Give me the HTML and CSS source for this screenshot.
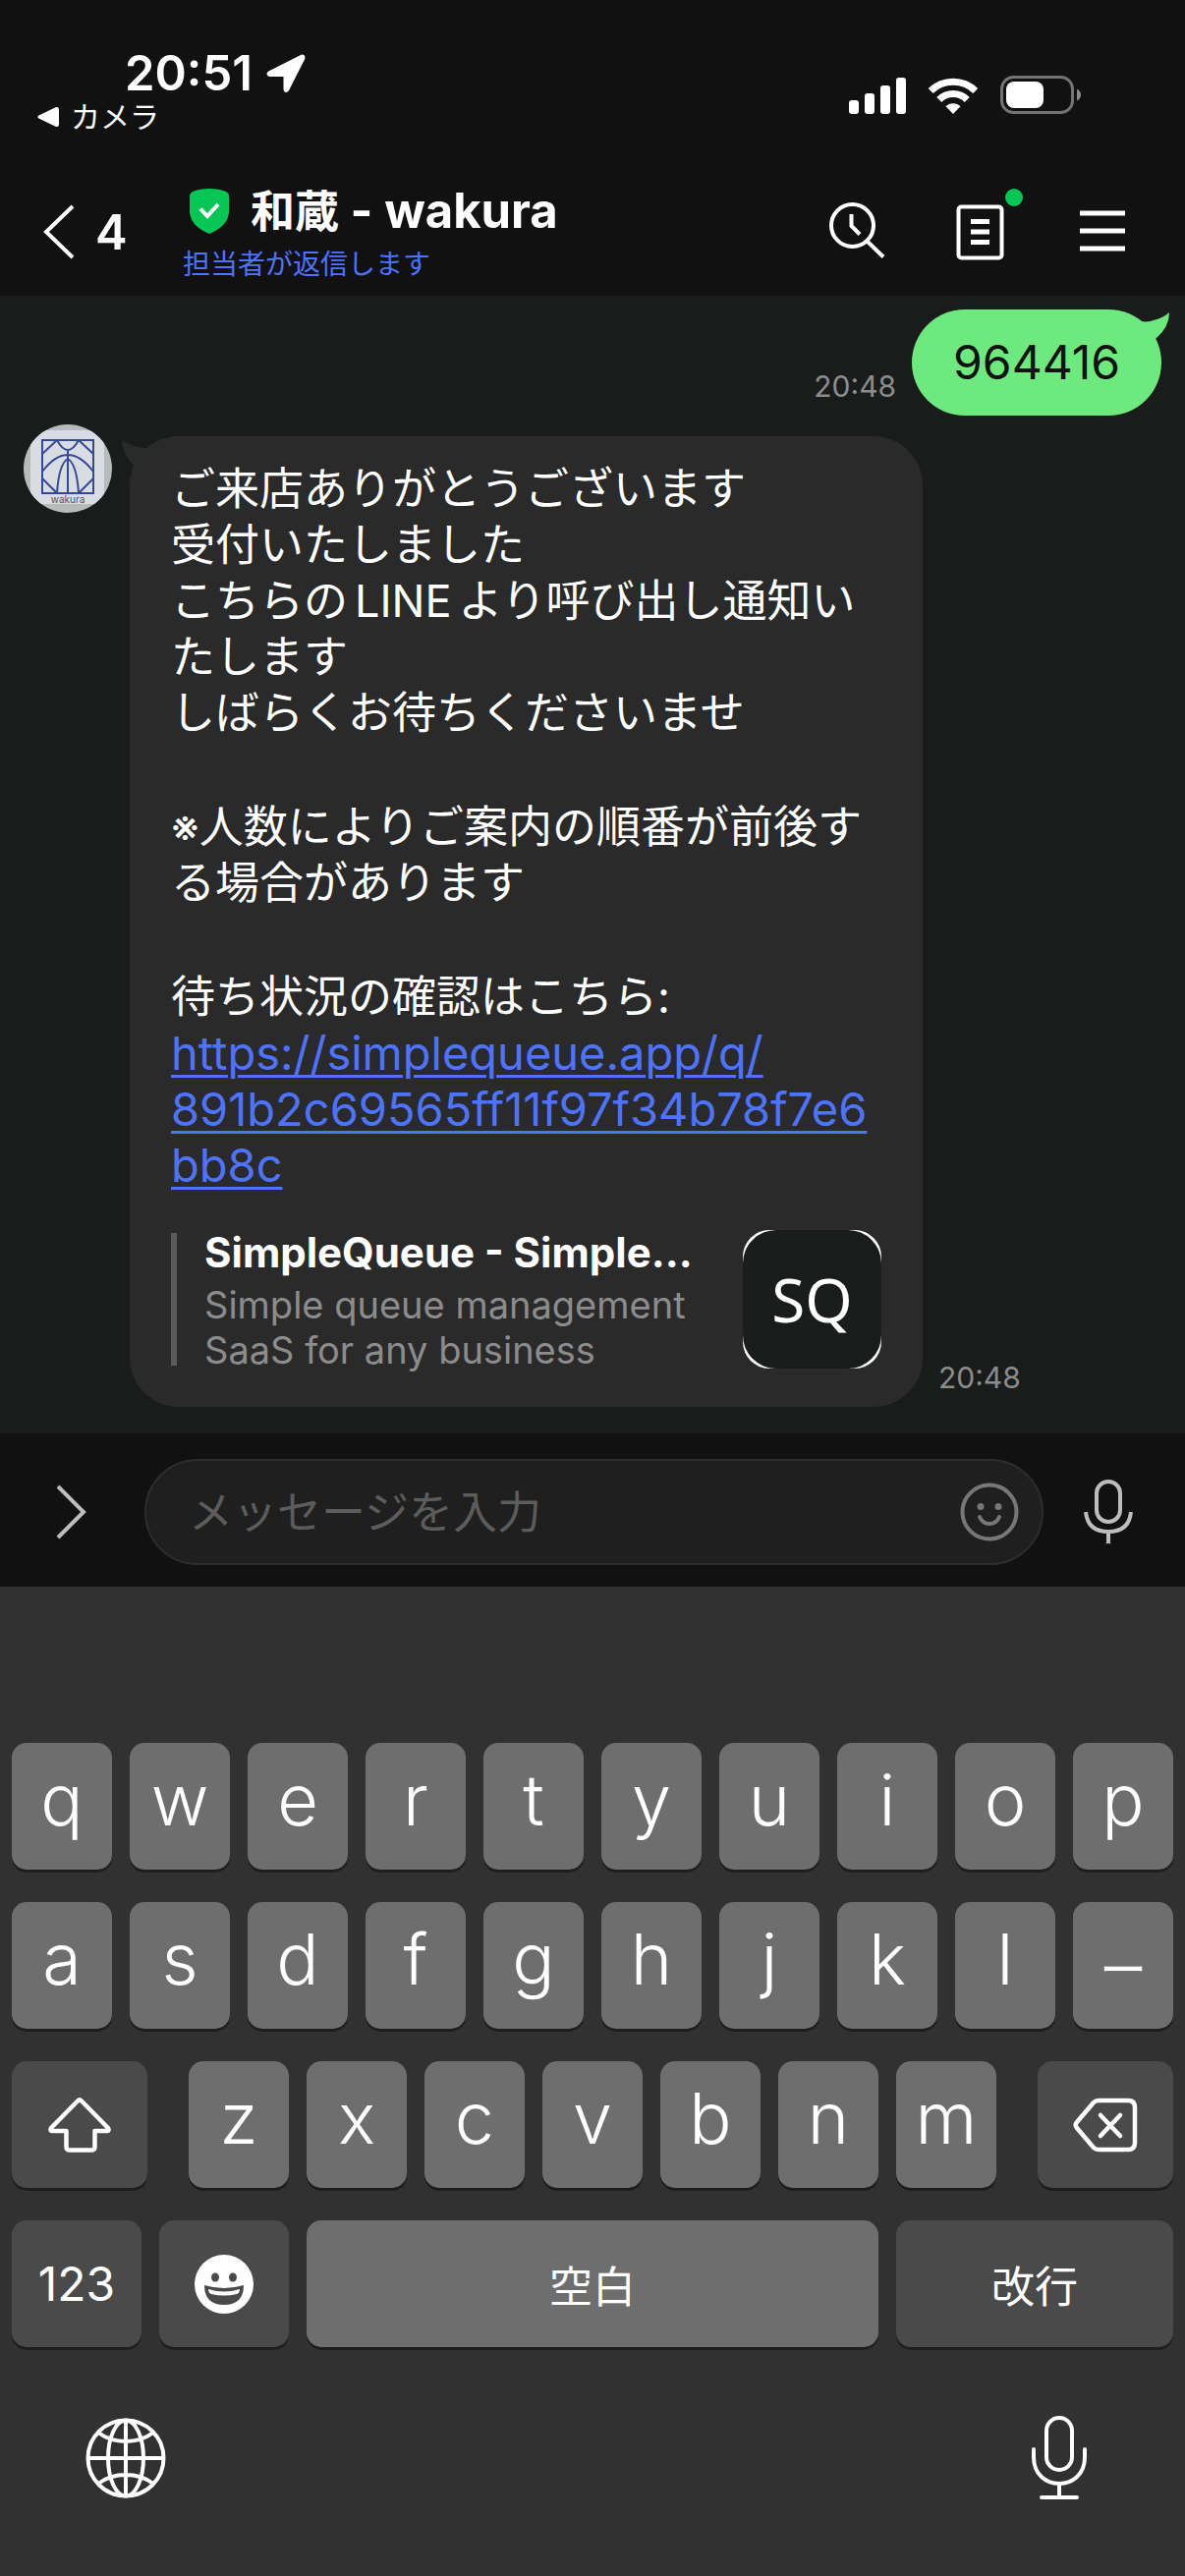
FILE: index.html
```html
<!DOCTYPE html>
<html lang="ja">
<head>
<meta charset="utf-8">
<meta name="viewport" content="width=device-width, initial-scale=1">
<title>和蔵 - wakura</title>
<link rel="stylesheet" href="styles.css">
</head>
<body>
<header class="header">
  <div class="status">
    <div class="status-left">
      <div class="clock">
        <span>20:51</span>
        <svg width="40" height="40" viewBox="0 0 40 40" aria-hidden="true"><path d="M34.500 1.200 2.800 17.200C-.8 19.200.2 23 3.800 23H17.500V35.500C17.500 39.800 21.800 40 23.300 36.500L39 5.500C40.500 2 38 -.6 34.500 1.200Z" fill="#fff"/></svg>
      </div>
      <a class="return-app" href="#">
        <svg width="22" height="22" viewBox="0 0 22 22" aria-hidden="true"><path d="M1.500 9.500 18.500 1.300Q22 0 22 3.500V18.500Q22 22 18.500 20.700L1.500 12.500Q-.8 11 1.500 9.500Z" fill="#fff"/></svg>
        <span>カメラ</span>
      </a>
    </div>
    <div class="status-right">
      <svg width="58" height="38" viewBox="0 0 58 38" fill="#fff" aria-hidden="true"><rect y="24" width="10" height="14" rx="3"/><rect x="16" y="17" width="10" height="21" rx="3"/><rect x="32" y="9" width="10" height="29" rx="3"/><rect x="48" y="1" width="10" height="37" rx="3"/></svg>
      <svg width="52" height="38" viewBox="0 0 52 38" aria-hidden="true"><g fill="none" stroke="#fff" stroke-width="7"><path d="M3.200 14.500A32.500 32.500 0 0 1 48.800 14.500"/><path d="M11.800 23.500A20 20 0 0 1 40.200 23.500"/></g><path d="M26 38 18.500 30.300A10.500 10.500 0 0 1 33.500 30.300Z" fill="#fff"/></svg>
      <svg width="82" height="40" viewBox="0 0 82 40" aria-hidden="true"><rect x="1.500" y="1.500" width="72" height="36" rx="12" fill="none" stroke="#737373" stroke-width="3"/><rect x="6" y="6" width="38" height="27" rx="8" fill="#fff"/><path d="M78 13.500Q82 15.500 82 19.500T78 25.500Z" fill="#8a8a8a"/></svg>
    </div>
  </div>
  <nav class="nav">
    <button class="back" aria-label="戻る">
      <svg width="34" height="56" viewBox="0 0 34 56" aria-hidden="true"><path d="M31 2 4 28 31 54" fill="none" stroke="#fff" stroke-width="4"/></svg>
      <span>4</span>
    </button>
    <div class="contact">
      <h1 class="contact-name">
        <svg width="40" height="46" viewBox="0 0 40 46" aria-hidden="true"><path d="M20 0Q30 0 37 3Q40 4.500 40 8V24Q39 38 20 46Q1 38 0 24V8Q0 4.500 3 3Q10 0 20 0Z" fill="#06c755"/><path d="M11 20.500 18 28 29 16" fill="none" stroke="#fff" stroke-width="4"/></svg>
        <span><span class="kanji">和蔵</span> - wakura</span>
      </h1>
      <p class="contact-status">担当者が返信します</p>
    </div>
    <div class="nav-actions">
      <button aria-label="検索"><svg width="60" height="60" viewBox="0 0 60 60" fill="none" stroke="#fff" stroke-width="4" aria-hidden="true"><circle cx="25.500" cy="23.500" r="21.500"/><path d="M24.500 12V24L33 32.500M40.500 39.500 57 55.500"/></svg></button>
      <button class="has-dot" aria-label="ノート"><svg width="60" height="60" viewBox="0 0 60 60" fill="none" stroke="#fff" stroke-width="4" aria-hidden="true"><rect x="8.500" y="4.500" width="44" height="52" rx="3"/><path d="M21 19.500H40M21 30H40M21 40.500H40" stroke-width="5"/></svg></button>
      <button aria-label="メニュー"><svg width="60" height="60" viewBox="0 0 60 60" stroke="#fff" stroke-width="5" aria-hidden="true"><path d="M7 11H53M7 29H53M7 47H53"/></svg></button>
    </div>
  </nav>
</header>

<main class="chat">
  <div class="message sent">
    <time class="time">20:48</time>
    <div class="bubble bubble-sent">
      <svg class="tail" width="40" height="40" viewBox="0 0 40 40" aria-hidden="true"><path d="M2 7Q13 13 24 9Q33 7 40 1Q40 16 27 27L14 36Z" fill="#6ee97e"/></svg>
      964416
    </div>
  </div>
  <div class="message received">
    <svg class="avatar" width="90" height="90" viewBox="0 0 90 90" role="img" aria-label="wakura">
      <clipPath id="round"><circle cx="45" cy="45" r="45"/></clipPath>
      <g clip-path="url(#round)">
        <rect width="90" height="90" fill="#b9bbbb"/>
        <rect x="7" y="6" width="75" height="75" fill="#d9dce2"/>
        <g fill="none" stroke="#34499a" stroke-width="2"><rect x="19" y="16" width="52" height="54"/><path d="M45 25V70M34 16Q45 36 56 16M34 16 19 30M56 16 71 30M19 48Q45 14 71 48M34 70Q36 40 45 35Q54 40 56 70M19 55 34 70M71 55 56 70"/></g>
        <text class="avatar-name" x="45" y="80" text-anchor="middle">wakura</text>
      </g>
    </svg>
    <div class="bubble bubble-received">
      <svg class="tail" width="40" height="40" viewBox="0 0 40 40" aria-hidden="true"><path d="M0 4Q14 13 27 12L36 20 20 36 13 30Q1 20 0 4Z" fill="#2a2a2a"/></svg>
      <p>ご来店ありがとうございます<br>受付いたしました<br>こちらの<span class="latin">LINE</span>より呼び出し通知いたします<br>しばらくお待ちくださいませ</p>
      <p>※人数によりご案内の順番が前後する場合があります</p>
      <p>待ち状況の確認はこちら: <a class="url" href="#">https://simplequeue.app/q/<wbr>891b2c69565ff11f97f34b78f7e6bb8c</a></p>
      <a class="preview" href="#">
        <span class="preview-text">
          <strong>SimpleQueue - Simple...</strong>
          <span>Simple queue management SaaS for any business</span>
        </span>
        <span class="preview-thumb"><span>SQ</span></span>
      </a>
    </div>
    <time class="time">20:48</time>
  </div>
</main>

<form class="composer">
  <button type="button" aria-label="開く"><svg width="32" height="56" viewBox="0 0 32 56" aria-hidden="true"><path d="M2 2 28 28 2 54" fill="none" stroke="#bdbdbd" stroke-width="4"/></svg></button>
  <div class="field">
    <input type="text" placeholder="メッセージを入力" aria-label="メッセージを入力">
    <button type="button" aria-label="スタンプ"><svg width="60" height="60" viewBox="0 0 60 60" fill="none" stroke="#777" stroke-width="4" aria-hidden="true"><circle cx="30" cy="30" r="27.500"/><path d="M20 35Q23 42 30 42T40 35" stroke-linecap="round"/><g fill="#777" stroke="none"><circle cx="21" cy="24.500" r="3.500"/><circle cx="39" cy="24.500" r="3.500"/></g></svg></button>
  </div>
  <button type="button" aria-label="音声"><svg width="50" height="66" viewBox="0 0 50 66" fill="none" stroke="#bdbdbd" stroke-width="4" aria-hidden="true"><rect x="13" y="2" width="24" height="41" rx="12"/><path d="M2 33Q4 53 25 53T48 33M25 53V65"/></svg></button>
</form>

<section class="keyboard" aria-label="キーボード">
  <div class="row">
    <button class="key">q</button><button class="key">w</button><button class="key">e</button><button class="key">r</button><button class="key">t</button><button class="key">y</button><button class="key">u</button><button class="key">i</button><button class="key">o</button><button class="key">p</button>
  </div>
  <div class="row">
    <button class="key">a</button><button class="key">s</button><button class="key">d</button><button class="key">f</button><button class="key">g</button><button class="key">h</button><button class="key">j</button><button class="key">k</button><button class="key">l</button><button class="key key-long">ー</button>
  </div>
  <div class="row row-shift">
    <button class="key key-dark" aria-label="シフト"><svg width="64" height="56" viewBox="0 0 64 56" aria-hidden="true"><path d="M30 3.500Q32 1.500 34 3.500L61 31Q62.500 34 60 34H47.500V50Q47.500 53.500 44 53.500H22Q18.500 53.500 18.500 50V34H4Q1.500 34 3 31Z" fill="none" stroke="#fff" stroke-width="4.500" stroke-linejoin="round"/></svg></button>
    <div class="row letters">
      <button class="key">z</button><button class="key">x</button><button class="key">c</button><button class="key">v</button><button class="key">b</button><button class="key">n</button><button class="key">m</button>
    </div>
    <button class="key key-dark" aria-label="削除"><svg width="66" height="56" viewBox="0 0 66 56" fill="none" stroke="#fff" stroke-width="4.500" stroke-linecap="round" stroke-linejoin="round" aria-hidden="true"><path d="M26 3H56Q63 3 63 10V46Q63 53 56 53H26Q23 53 21 51L4 31Q1.500 28 4 25L21 5Q23 3 26 3Z"/><path d="M28 18 48 39M48 18 28 39"/></svg></button>
  </div>
  <div class="row row-space">
    <button class="key key-dark key-number">123</button>
    <button class="key key-dark" aria-label="絵文字"><svg width="60" height="60" viewBox="0 0 60 60" aria-hidden="true"><circle cx="30" cy="30" r="30" fill="#fff"/><g fill="#4a4a4a"><ellipse cx="21" cy="23" rx="4" ry="4.500"/><ellipse cx="39" cy="23" rx="4" ry="4.500"/><path d="M10 31Q30 37 50 31Q50 51 30 51T10 31Z"/></g><path d="M14 35Q30 40 46 35Q46 39 43 40Q30 43 17 40Q14 39 14 35Z" fill="#fff"/></svg></button>
    <button class="key key-word">空白</button>
    <button class="key key-dark key-word">改行</button>
  </div>
  <div class="dock">
    <button aria-label="次のキーボード"><svg width="82" height="82" viewBox="0 0 82 82" fill="none" stroke="#fff" stroke-width="4" aria-hidden="true"><circle cx="41" cy="41" r="38.500"/><ellipse cx="41" cy="41" rx="18" ry="38.500"/><path d="M41 2V80M2 41H80M13 15Q25 24 41 24T69 15M13 67Q25 58 41 58T69 67"/></svg></button>
    <button aria-label="音声入力"><svg width="56" height="86" viewBox="0 0 56 86" fill="none" stroke="#fff" stroke-width="4" stroke-linecap="round" aria-hidden="true"><rect x="15" y="2" width="26" height="53" rx="13"/><path d="M2 34V42C2 78 54 78 54 42V34M28 69V83M10 83H46"/></svg></button>
  </div>
</section>
</body>
</html>
```
FILE: styles.css
```css
* {
  box-sizing: border-box;
}

body {
  margin: 0;
  min-height: 100vh;
  display: flex;
  flex-direction: column;
  background: #313131;
  color: #fff;
  font-family: Inter, "Noto Sans CJK JP", sans-serif;
}

h1,
p {
  margin: 0;
}

button {
  display: flex;
  align-items: center;
  justify-content: center;
  padding: 0;
  border: 0;
  background: none;
  color: inherit;
  font: inherit;
}

svg {
  display: block;
  flex: none;
}

/* Status bar and chat header */
.header {
  background: #111;
}

.status {
  display: flex;
  justify-content: space-between;
  align-items: center;
  padding: 47px 106px 0 38px;
}

.clock {
  display: flex;
  align-items: center;
  gap: 14px;
  padding-left: 89px;
  font-size: 49px;
  font-weight: 600;
  line-height: 56px;
}

.return-app {
  display: flex;
  align-items: center;
  gap: 12px;
  color: #fff;
  font-size: 30px;
  line-height: 32px;
  text-decoration: none;
}

.status-right {
  display: flex;
  align-items: center;
  gap: 22px;
  padding-top: 12px;
}

.nav {
  display: flex;
  align-items: center;
  height: 166px;
  padding: 36px 54px 0 43px;
}

.back {
  gap: 20px;
  width: 143px;
  justify-content: flex-start;
  font-size: 49px;
  font-weight: 600;
}

.contact {
  flex: 1;
}

.contact-name {
  display: flex;
  align-items: center;
  gap: 22px;
  padding-left: 7px;
  font-size: 49px;
  font-weight: 700;
  line-height: 58px;
}

.kanji {
  font-size: 45px;
  line-height: 1;
}

.contact-status {
  margin-top: 8px;
  color: #4d73ff;
  font-size: 28px;
  line-height: 34px;
}

.nav-actions {
  display: flex;
  gap: 65px;
}

.has-dot {
  position: relative;
}

.has-dot::after {
  content: "";
  position: absolute;
  top: -14px;
  right: -14px;
  width: 18px;
  height: 18px;
  border-radius: 50%;
  background: #06c755;
}

/* Conversation */
.chat {
  flex: 1;
  padding: 14px 24px 27px;
  background: #1a1c1b;
}

.message {
  display: flex;
}

.sent {
  justify-content: flex-end;
  align-items: flex-end;
  gap: 16px;
}

.received {
  gap: 18px;
  margin-top: 9px;
}

.time {
  align-self: flex-end;
  margin-bottom: 10px;
  color: #8c8c8c;
  font-size: 30px;
  line-height: 40px;
}

.received .time {
  margin-left: -2px;
}

.bubble {
  position: relative;
}

.bubble-sent {
  padding: 25px 42px 26px;
  border-radius: 54px;
  background: #6ee97e;
  color: #111;
  font-size: 48px;
  line-height: 57px;
}

.bubble-received {
  flex: 0 1 807px;
  min-width: 0;
  margin-top: 12px;
  padding: 25px 42px 39px;
  border-radius: 50px;
  background: #2a2a2a;
  font-size: 45px;
  line-height: 57px;
}

.bubble-received p + p {
  margin-top: 59px;
}

.tail {
  position: absolute;
}

.bubble-sent .tail {
  top: 2px;
  right: -8px;
}

.bubble-received .tail {
  top: 0;
  left: -8px;
}

.avatar-name {
  fill: #555;
  font-size: 10px;
}

.latin {
  padding: 0 7px;
}

.url {
  display: block;
  color: #4d73ff;
  font-size: 47px;
  overflow-wrap: anywhere;
  text-decoration-thickness: 3px;
  text-underline-offset: 5px;
}

.preview {
  display: flex;
  align-items: center;
  gap: 28px;
  margin-top: 38px;
  color: #fff;
  text-decoration: none;
}

.preview::before {
  content: "";
  width: 6px;
  height: 135px;
  background: #5a5a5a;
}

.preview-text {
  flex: 1;
  color: #8c8c8c;
  font-size: 38px;
  line-height: 46px;
}

/* The text column is taller than the thumbnail and may spill evenly past it */
.preview-text {
  margin: -4px 0;
}

.preview-text strong {
  display: block;
  margin-bottom: 4px;
  color: #fff;
  font-size: 42px;
  font-weight: 700;
  line-height: 52px;
  white-space: nowrap;
}

.preview-thumb {
  width: 141px;
  height: 141px;
  border-radius: 27px;
  background: #fff;
}

.preview-thumb span {
  display: flex;
  align-items: center;
  justify-content: center;
  height: 100%;
  border-radius: 34px;
  background: #1a1c1b;
  font-family: "Noto Sans", sans-serif;
  font-size: 62px;
}

/* Message composer */
.composer {
  display: flex;
  align-items: center;
  justify-content: space-between;
  gap: 41px;
  padding: 26px 53px 22px 57px;
  background: #111;
}

.field {
  flex: 1;
  display: flex;
  align-items: center;
  height: 108px;
  margin-left: 17px;
  padding: 0 23px 0 43px;
  border: 2px solid #2d2d2d;
  border-radius: 54px;
  background: #1f1f1f;
}

.field input {
  flex: 1;
  min-width: 0;
  padding: 0;
  border: 0;
  outline: 0;
  background: none;
  color: #fff;
  font: inherit;
  font-size: 45px;
}

.field input::placeholder {
  color: #5c5c5c;
  opacity: 1;
}

/* Keyboard */
.keyboard {
  display: grid;
  gap: 33px;
  padding: 159px 12px 78px;
  background: #313131;
}

.row {
  display: grid;
  grid-template-columns: repeat(10, 1fr);
  gap: 18px;
}

.row-shift {
  grid-template-columns: 138fr 822fr 138fr;
  gap: 42px;
}

.letters {
  grid-template-columns: repeat(7, 1fr);
}

.row-space {
  grid-template-columns: 132fr 132fr 582fr 282fr;
}

.key {
  height: 129px;
  padding-bottom: 14px;
  border-radius: 15px;
  background: #6e6e6e;
  box-shadow: 0 3px 0 #1e1e1e;
  font-size: 72px;
  font-weight: 300;
}

.key-dark {
  padding-bottom: 0;
  background: #4a4a4a;
}

.key-long {
  padding-bottom: 0;
  font-size: 48px;
  font-weight: 400;
}

.key-word {
  padding-bottom: 0;
  font-size: 44px;
  font-weight: 400;
}

.key-number {
  font-size: 48px;
  font-weight: 400;
}

.dock {
  display: flex;
  align-items: center;
  justify-content: space-between;
  padding: 37px 88px 0 75px;
}
```
